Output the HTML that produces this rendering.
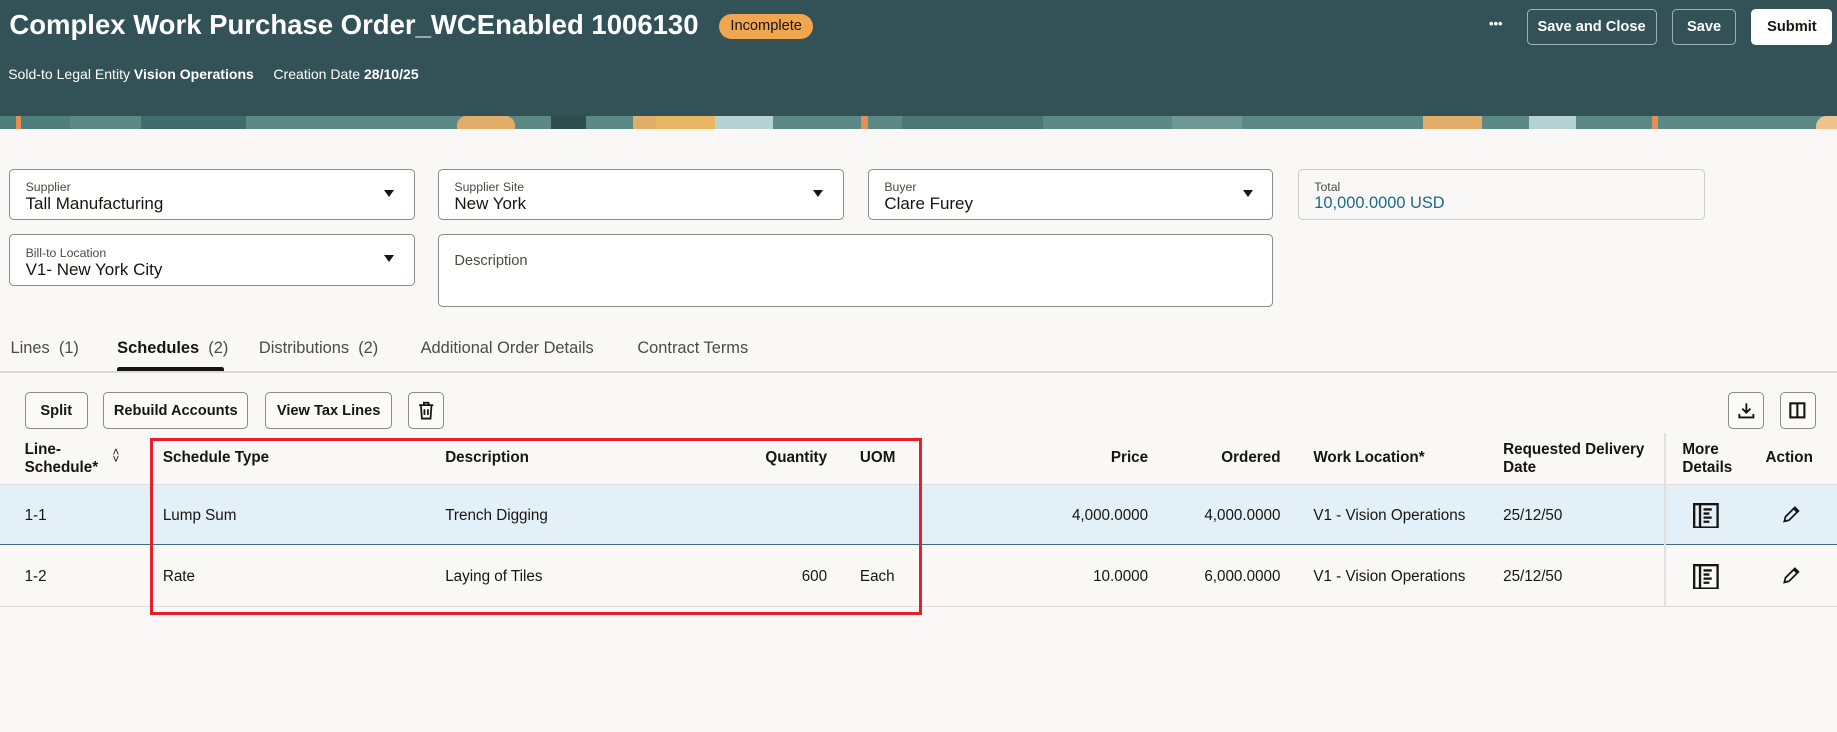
<!DOCTYPE html>
<html><head><meta charset="utf-8"><style>
*{box-sizing:border-box;margin:0;padding:0}
html,body{width:1837px;height:732px;overflow:hidden;background:#f9f8f6}
#w{zoom:1.17156;width:1568px;height:625px;position:relative;font-family:"Liberation Sans",sans-serif;color:#161513}
.a{position:absolute}
.hdr{left:0;top:0;width:1568px;height:99px;background:#325257}
.ban{left:0;top:99px;width:1568px;height:11px;background:#5b8a86;overflow:hidden}
.ban i{position:absolute;top:0;height:11px;display:block}
.btn{position:absolute;border:1px solid #9fb1b3;border-radius:4px;color:#fff;font-size:12.5px;font-weight:bold;display:flex;align-items:center;justify-content:center}
.fld{position:absolute;background:#fff;border:1px solid #8f8c88;border-radius:4px}
.fld .l{position:absolute;left:13px;top:9px;font-size:10.5px;color:#4d4a47}
.fld .v{position:absolute;left:13px;top:21px;font-size:14.5px}
.fld .c{position:absolute;right:17px;top:17px;width:0;height:0;border-left:5px solid transparent;border-right:5px solid transparent;border-top:6px solid #161513}
.tab{position:absolute;top:289px;font-size:14px;color:#4d4a47}
.tb{position:absolute;top:335px;height:31px;border:1px solid #8f8c88;border-radius:4px;background:#fbfaf8;font-size:12.5px;font-weight:bold;display:flex;align-items:center;justify-content:center}
.th{position:absolute;font-size:13px;font-weight:bold;line-height:16px}
.td{position:absolute;font-size:13px}
</style></head><body><div id="w">
<div class="a hdr"></div>
<div class="a ban">
<i style="left:0;width:60px;background:#4e7f7b"></i><i style="left:14px;width:4px;background:#e58f55"></i>
<i style="left:120px;width:90px;background:#3f6c6c"></i><i style="left:390px;width:50px;background:#e2ad68;border-radius:8px 8px 0 0"></i>
<i style="left:470px;width:30px;background:#2f4d4f"></i><i style="left:540px;width:40px;background:#e2ad68"></i>
<i style="left:560px;width:60px;background:#e9b662"></i><i style="left:610px;width:50px;background:#b7d2d2"></i>
<i style="left:735px;width:6px;background:#e58f55"></i><i style="left:770px;width:120px;background:#4b7774"></i>
<i style="left:1000px;width:60px;background:#6f9895"></i><i style="left:1215px;width:50px;background:#e2ad68"></i>
<i style="left:1305px;width:40px;background:#b7d2d2"></i><i style="left:1410px;width:5px;background:#e58f55"></i>
<i style="left:1550px;width:18px;background:#f0c28e;border-radius:9px 0 0 0"></i>
</div>
<div class="a" style="left:8px;top:8px;font-size:23.5px;font-weight:bold;color:#fff">Complex Work Purchase Order_WCEnabled 1006130</div>
<div class="a" style="left:614px;top:12px;width:80px;height:21px;border-radius:11px;background:#f0a54f;font-size:12.5px;display:flex;align-items:center;justify-content:center;color:#161513">Incomplete</div>
<div class="a" style="left:7px;top:56px;font-size:12px;color:#fff">Sold-to Legal Entity <b>Vision Operations</b> &nbsp; &nbsp; Creation Date <b>28/10/25</b></div>
<div class="a" style="left:1271px;top:14px;font-size:11px;color:#fff;font-weight:bold;letter-spacing:0px">•••</div>
<div class="btn" style="left:1303px;top:8px;width:111px;height:30px">Save and Close</div>
<div class="btn" style="left:1427px;top:8px;width:55px;height:30px">Save</div>
<div class="btn" style="left:1495px;top:8px;width:69px;height:30px;background:#fff;color:#161513;border-color:#fff">Submit</div>

<div class="fld" style="left:8px;top:144px;width:346px;height:44px"><div class="l">Supplier</div><div class="v">Tall Manufacturing</div><div class="c"></div></div>
<div class="fld" style="left:374px;top:144px;width:346px;height:44px"><div class="l">Supplier Site</div><div class="v">New York</div><div class="c"></div></div>
<div class="fld" style="left:741px;top:144px;width:346px;height:44px"><div class="l">Buyer</div><div class="v">Clare Furey</div><div class="c"></div></div>
<div class="fld" style="left:1108px;top:144px;width:347px;height:44px;background:#f9f8f6;border-color:#cfccc8"><div class="l">Total</div><div class="v" style="color:#1a6a8a;font-size:14px;top:21px">10,000.0000 USD</div></div>
<div class="fld" style="left:8px;top:200px;width:346px;height:44px"><div class="l">Bill-to Location</div><div class="v">V1- New York City</div><div class="c"></div></div>
<div class="fld" style="left:374px;top:200px;width:713px;height:62px"><div class="l" style="top:15px;font-size:12.5px">Description</div></div>

<div class="tab" style="left:9px">Lines &nbsp;(1)</div>
<div class="tab" style="left:100px;color:#161513"><b>Schedules</b> &nbsp;<span style="color:#4d4a47">(2)</span></div>
<div class="tab" style="left:221px">Distributions &nbsp;(2)</div>
<div class="tab" style="left:359px">Additional Order Details</div>
<div class="tab" style="left:544px">Contract Terms</div>
<div class="a" style="left:0;top:317px;width:1568px;height:1px;background:#dedbd7"></div>
<div class="a" style="left:100px;top:313px;width:91px;height:4px;background:#161513;border-radius:2px 2px 0 0"></div>

<div class="tb" style="left:21px;width:54px">Split</div>
<div class="tb" style="left:88px;width:124px">Rebuild Accounts</div>
<div class="tb" style="left:226px;width:109px">View Tax Lines</div>
<div class="tb" style="left:348px;width:31px"><svg width="14" height="16" viewBox="0 0 14 16" fill="none" stroke="#161513" stroke-width="1.5"><path d="M1 3.5h12M5 3V1.5h4V3M2.5 4l.8 11h7.4l.8-11M5.5 7v5M8.5 7v5"/></svg></div>
<div class="tb" style="left:1475px;width:31px"><svg width="16" height="16" viewBox="0 0 16 16" fill="none" stroke="#161513" stroke-width="1.6"><path d="M8 2v8M4.5 6.5 8 10l3.5-3.5M2 11v3h12v-3"/></svg></div>
<div class="tb" style="left:1519px;width:31px"><svg width="16" height="16" viewBox="0 0 16 16" fill="none" stroke="#161513" stroke-width="1.8"><rect x="2" y="2" width="12" height="12"/><path d="M8 2v12"/></svg></div>

<div class="a" style="left:0;top:413px;width:1568px;height:1px;background:#dedbd7"></div>
<div class="a" style="left:0;top:414px;width:1568px;height:51px;background:#e4f0f7;border-bottom:1px solid #3b6e85"></div>
<div class="a" style="left:0;top:517px;width:1568px;height:1px;background:#dedbd7"></div>
<div class="a" style="left:1420px;top:370px;width:2px;height:147px;background:#e2e0dc"></div>

<div class="th" style="left:21px;top:376px">Line-<br>Schedule*</div>
<div class="a" style="left:96px;top:383px;font-size:10px;line-height:6px">&#x2c4;<br>&#x2c5;</div>
<div class="th" style="left:139px;top:383px">Schedule Type</div>
<div class="th" style="left:380px;top:383px">Description</div>
<div class="th" style="left:606px;top:383px;width:100px;text-align:right">Quantity</div>
<div class="th" style="left:734px;top:383px">UOM</div>
<div class="th" style="left:880px;top:383px;width:100px;text-align:right">Price</div>
<div class="th" style="left:993px;top:383px;width:100px;text-align:right">Ordered</div>
<div class="th" style="left:1121px;top:383px">Work Location*</div>
<div class="th" style="left:1283px;top:376px">Requested Delivery<br>Date</div>
<div class="th" style="left:1436px;top:376px">More<br>Details</div>
<div class="th" style="left:1507px;top:383px">Action</div>

<div class="td" style="left:21px;top:433px">1-1</div>
<div class="td" style="left:139px;top:433px">Lump Sum</div>
<div class="td" style="left:380px;top:433px">Trench Digging</div>
<div class="td" style="left:830px;top:433px;width:150px;text-align:right">4,000.0000</div>
<div class="td" style="left:943px;top:433px;width:150px;text-align:right">4,000.0000</div>
<div class="td" style="left:1121px;top:433px">V1 - Vision Operations</div>
<div class="td" style="left:1283px;top:433px">25/12/50</div>

<div class="td" style="left:21px;top:485px">1-2</div>
<div class="td" style="left:139px;top:485px">Rate</div>
<div class="td" style="left:380px;top:485px">Laying of Tiles</div>
<div class="td" style="left:606px;top:485px;width:100px;text-align:right">600</div>
<div class="td" style="left:734px;top:485px">Each</div>
<div class="td" style="left:830px;top:485px;width:150px;text-align:right">10.0000</div>
<div class="td" style="left:943px;top:485px;width:150px;text-align:right">6,000.0000</div>
<div class="td" style="left:1121px;top:485px">V1 - Vision Operations</div>
<div class="td" style="left:1283px;top:485px">25/12/50</div>

<svg class="a" style="left:1445px;top:429px" width="22" height="22" viewBox="0 0 22 22" fill="none" stroke="#161513" stroke-width="2"><rect x="1" y="1" width="20" height="20"/><path d="M6 1v20M9 5.5h7M9 9h5M9 12.5h7M9 16h5"/></svg>
<svg class="a" style="left:1445px;top:481px" width="22" height="22" viewBox="0 0 22 22" fill="none" stroke="#161513" stroke-width="2"><rect x="1" y="1" width="20" height="20"/><path d="M6 1v20M9 5.5h7M9 9h5M9 12.5h7M9 16h5"/></svg>
<svg class="a" style="left:1521px;top:431px" width="16" height="16" viewBox="0 0 16 16" fill="none" stroke="#161513" stroke-width="1.5"><path d="M2 14l1-4L11 2l3 3-8 8zM10 3l3 3"/></svg>
<svg class="a" style="left:1521px;top:483px" width="16" height="16" viewBox="0 0 16 16" fill="none" stroke="#161513" stroke-width="1.5"><path d="M2 14l1-4L11 2l3 3-8 8zM10 3l3 3"/></svg>

<div class="a" style="left:128px;top:374px;width:659px;height:151px;border:3px solid #e3202b"></div>
</div></body></html>
